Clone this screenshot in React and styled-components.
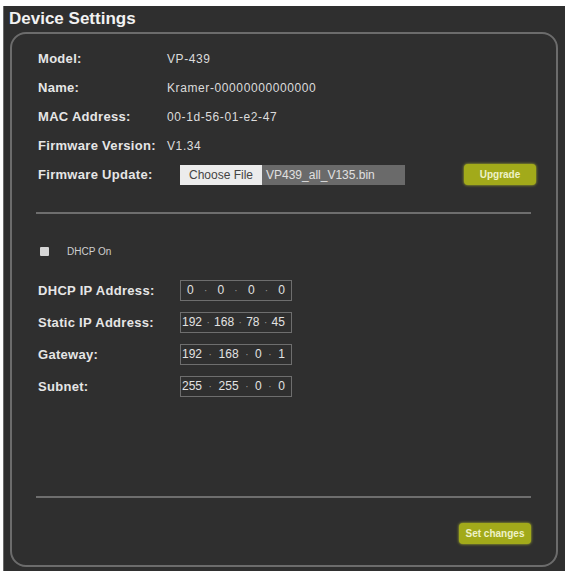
import React from 'react';
import styled, { createGlobalStyle } from 'styled-components';

const Global = createGlobalStyle`
  body {
    margin: 0;
    background: #ffffff;
    font-family: "Liberation Sans", Arial, sans-serif;
  }
`;

const Page = styled.div`
  margin: 6px 0 0 3px;
  height: 565px;
  background: #2f2f2f;
  border-left: 1px solid #6a6a6a;
  display: flex;
  flex-direction: column;
  box-sizing: border-box;
  padding: 0 7px 4px 6px;
`;

const Title = styled.h1`
  margin: 0;
  height: 26px;
  line-height: 26px;
  font-size: 17px;
  font-weight: bold;
  color: #f2f2f2;
  margin-left: -1px;
`;

const Panel = styled.div`
  flex: 1;
  border: 2px solid #6c6c6c;
  border-radius: 16px;
  display: flex;
  flex-direction: column;
  padding: 10px 20px 0 24px;
  box-sizing: border-box;
`;

const Row = styled.div`
  display: flex;
  align-items: center;
  height: ${p => p.h || 29}px;
  padding-left: 2px;
`;

const Label = styled.div`
  width: 129px;
  flex-shrink: 0;
  font-size: 13px;
  font-weight: bold;
  color: #e6e6e6;
  letter-spacing: 0.3px;
`;

const Value = styled.div`
  font-size: 12px;
  color: #dcdcdc;
  letter-spacing: 0.6px;
`;

const FileInput = styled.div`
  display: flex;
  height: 20px;
  margin-left: 13px;
  font-size: 12px;
`;

const ChooseButton = styled.div`
  width: 82px;
  background: #ececec;
  color: #444444;
  display: flex;
  align-items: center;
  justify-content: center;
`;

const FileName = styled.div`
  width: 143px;
  background: #6a6a6a;
  color: #e0e0e0;
  display: flex;
  align-items: center;
  padding-left: 4px;
  box-sizing: border-box;
`;

const GreenButton = styled.button`
  margin-left: auto;
  width: ${p => p.w}px;
  height: 21px;
  border: none;
  border-radius: 4px;
  background: #a2aa1a;
  box-shadow: 0 0 3px #bcc62a;
  color: #eef2c8;
  font-family: inherit;
  font-size: 10px;
  font-weight: bold;
  padding: 0;
`;

const Divider = styled.hr`
  border: none;
  height: 2px;
  background: #6e6e6e;
  margin: ${p => p.m};
  margin-right: 5px;
`;

const CheckRow = styled.label`
  display: flex;
  align-items: center;
  height: 26px;
  padding-left: 4px;
  gap: 18px;
  font-size: 10px;
  color: #cfcfcf;
`;

const Check = styled.span`
  width: 9px;
  height: 9px;
  background: #d6d6d6;
  border-radius: 1px;
`;

const IpList = styled.div`
  margin-top: 10px;
`;

const IpBox = styled.div`
  margin-left: 13px;
  width: 112px;
  height: 21px;
  border: 1px solid #6e6e6e;
  box-sizing: border-box;
  display: flex;
  align-items: center;
  justify-content: space-between;
  padding: 0 6px 0 ${p => (p.tight ? 1 : 6)}px;
  font-size: 12px;
  color: #e2e2e2;
`;

const Dot = styled.span`
  color: #9a9a9a;
  font-size: 10px;
`;

const Spacer = styled.div`
  flex: 1;
`;

const Footer = styled.div`
  display: flex;
  padding: 25px 5px 0 0;
  height: 67px;
  box-sizing: border-box;
`;

const info = [
  ['Model:', 'VP-439'],
  ['Name:', 'Kramer-00000000000000'],
  ['MAC Address:', '00-1d-56-01-e2-47'],
  ['Firmware Version:', 'V1.34'],
];

const ips = [
  ['DHCP IP Address:', ['0', '0', '0', '0']],
  ['Static IP Address:', ['192', '168', '78', '45']],
  ['Gateway:', ['192', '168', '0', '1']],
  ['Subnet:', ['255', '255', '0', '0']],
];

function Ip({ parts }) {
  const tight = parts[0].length > 1;
  return (
    <IpBox tight={tight}>
      {parts.map((p, i) => (
        <React.Fragment key={i}>
          {i > 0 && <Dot>·</Dot>}
          <span>{p}</span>
        </React.Fragment>
      ))}
    </IpBox>
  );
}

export default function App() {
  return (
    <>
      <Global />
      <Page>
        <Title>Device Settings</Title>
        <Panel>
          {info.map(([l, v]) => (
            <Row key={l}>
              <Label>{l}</Label>
              <Value>{v}</Value>
            </Row>
          ))}
          <Row>
            <Label>Firmware Update:</Label>
            <FileInput>
              <ChooseButton>Choose File</ChooseButton>
              <FileName>VP439_all_V135.bin</FileName>
            </FileInput>
            <GreenButton w={72}>Upgrade</GreenButton>
          </Row>
          <Divider m="23px 0 24px 0" />
          <CheckRow>
            <Check />
            DHCP On
          </CheckRow>
          <IpList>
            {ips.map(([l, parts]) => (
              <Row key={l} h={32}>
                <Label>{l}</Label>
                <Ip parts={parts} />
              </Row>
            ))}
          </IpList>
          <Spacer />
          <Divider m="0" />
          <Footer>
            <GreenButton w={72}>Set changes</GreenButton>
          </Footer>
        </Panel>
      </Page>
    </>
  );
}
